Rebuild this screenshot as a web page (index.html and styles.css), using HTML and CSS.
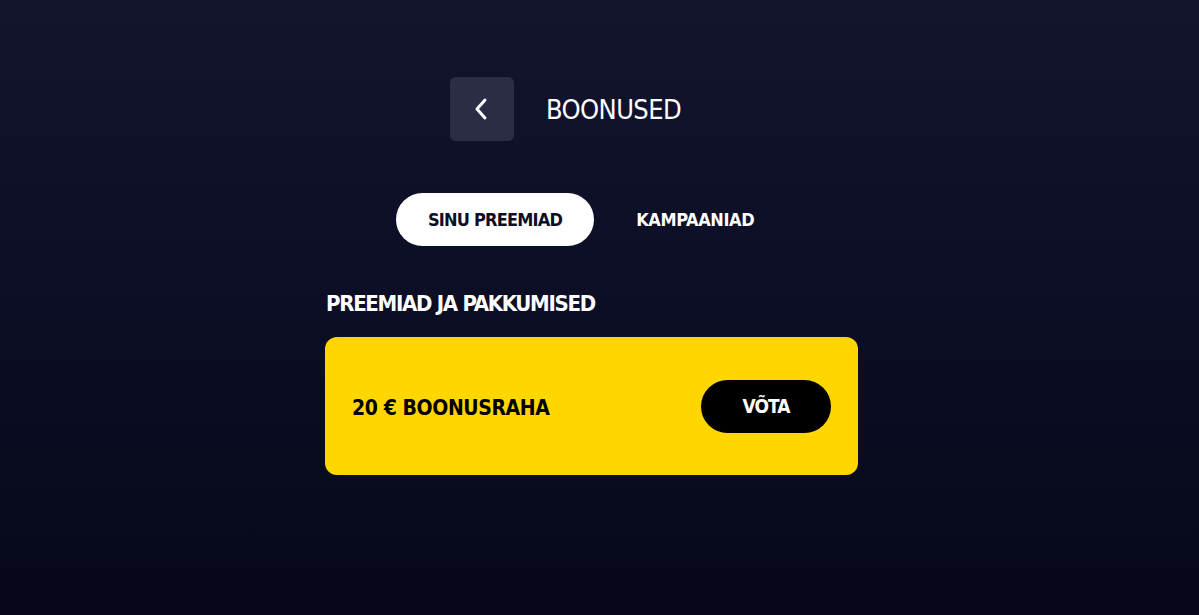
FILE: index.html
```html
<!DOCTYPE html>
<html lang="et">
<head>
<meta charset="utf-8">
<title>Boonused</title>
<link rel="stylesheet" href="styles.css">
</head>
<body>
<div class="page">
  <div class="wrap">
    <header class="header">
      <button class="back" aria-label="Tagasi">
        <svg width="20" height="24" viewBox="0 0 20 24"><path d="M13 3 L5 12 L13 21" fill="none" stroke="#fff" stroke-width="3" stroke-linecap="round" stroke-linejoin="round"/></svg>
      </button>
      <h1 class="title">BOONUSED</h1>
    </header>
    <nav class="tabs">
      <span class="tab active">SINU PREEMIAD</span>
      <span class="tab">KAMPAANIAD</span>
    </nav>
    <h2 class="section">PREEMIAD JA PAKKUMISED</h2>
    <div class="card">
      <span class="card-text">20 € BOONUSRAHA</span>
      <button class="take">VÕTA</button>
    </div>
  </div>
</div>
</body>
</html>
```

FILE: styles.css
```css
* { box-sizing: border-box; }
html, body { margin: 0; padding: 0; height: 100%; }
body {
  background: linear-gradient(180deg, #13152f 0%, #0c0e25 50%, #060819 100%);
  font-family: "DejaVu Sans Condensed", "DejaVu Sans", sans-serif;
  font-stretch: condensed;
  color: #fff;
}
.page { display: flex; justify-content: center; padding-top: 77px; }
.wrap { width: 549px; padding-right: 16px; }
.header { display: flex; align-items: center; gap: 32px; padding-left: 125px; }
.back {
  width: 64px; height: 64px; border: 0; border-radius: 6px;
  background: #2b2d45; display: flex; align-items: center; justify-content: center; padding: 0;
}
.title { margin: 0; font-size: 27px; font-weight: 400; letter-spacing: -0.6px; line-height: 32px; padding-top: 2px; }
.tabs { display: flex; align-items: center; gap: 10px; margin-top: 52px; padding-left: 71px; }
.tab {
  height: 53px; border-radius: 27px; padding: 0 32px;
  display: flex; align-items: center; font-weight: 700; font-size: 18px; letter-spacing: -0.8px;
}
.tab.active { background: #fff; color: #0d0f26; }
.tab + .tab { letter-spacing: -0.4px; }
.section { margin: 44px 0 0; font-size: 22px; font-weight: 700; line-height: 28px; padding-left: 1px; letter-spacing: -1.3px; }
.card {
  margin-top: 19px; height: 138px; background: #ffd600; border-radius: 12px;
  display: flex; align-items: center; justify-content: space-between; padding: 0 27px;
}
.card-text { color: #000; font-weight: 700; font-size: 21px; letter-spacing: -0.4px; padding-top: 4px; }
.take {
  width: 130px; height: 53px; border: 0; border-radius: 27px; background: #000; color: #fff;
  font-family: inherit; font-stretch: condensed; font-weight: 700; font-size: 19px; letter-spacing: -1px;
}
```
